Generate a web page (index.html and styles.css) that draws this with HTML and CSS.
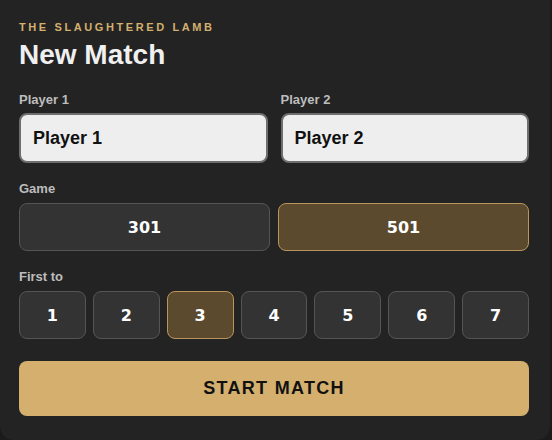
FILE: index.html
```html
<!DOCTYPE html>
<html lang="en">
<head>
    <meta charset="UTF-8">
    <meta name="viewport" content="width=device-width, initial-scale=1.0">
    <title>New Match</title>
    <link rel="stylesheet" href="styles.css">
</head>
<body>
    <div class="panel">
        <div class="brand">The Slaughtered Lamb</div>
        <h1 class="title">New Match</h1>

        <div class="players">
            <div class="field">
                <label for="p1">Player 1</label>
                <input type="text" id="p1" value="Player 1">
            </div>
            <div class="field">
                <label for="p2">Player 2</label>
                <input type="text" id="p2" value="Player 2">
            </div>
        </div>

        <div class="section">
            <div class="section-label">Game</div>
            <div class="game-options">
                <button class="option">301</button>
                <button class="option selected">501</button>
            </div>
        </div>

        <div class="section">
            <div class="section-label">First to</div>
            <div class="legs-options">
                <button class="option">1</button>
                <button class="option">2</button>
                <button class="option selected">3</button>
                <button class="option">4</button>
                <button class="option">5</button>
                <button class="option">6</button>
                <button class="option">7</button>
            </div>
        </div>

        <button class="start-button">START MATCH</button>
    </div>
</body>
</html>
```

FILE: styles.css
```css
html, body {
    margin: 0;
    height: 100%;
}

body {
    font-family: "Liberation Sans", Arial, sans-serif;
    background-color: #1b1b1b;
    color: #eee;
    overflow: hidden;
}

.panel {
    box-sizing: border-box;
    width: 550px;
    height: 440px;
    padding: 20px 21px 0 19px;
    background-color: #232323;
    border-radius: 0 0 14px 14px;
}

.brand {
    font-size: 11px;
    font-weight: 900;
    letter-spacing: 2.6px;
    text-transform: uppercase;
    color: #d4af6e;
    line-height: 14px;
}

.title {
    margin: 4px 0 0;
    font-size: 28px;
    font-weight: bold;
    line-height: 33px;
    color: #f0f0f0;
}

.players {
    display: flex;
    gap: 13px;
    margin-top: 21px;
}

.field {
    flex: 1;
    min-width: 0;
    display: flex;
    flex-direction: column;
}

.field label,
.section-label {
    font-size: 13px;
    font-weight: bold;
    color: #bdbdbd;
    line-height: 16px;
    margin-bottom: 5px;
}

.field input {
    box-sizing: border-box;
    width: 100%;
    height: 50px;
    padding: 0 12px;
    border: 2px solid #6e6e6e;
    border-radius: 8px;
    background-color: #eeeeee;
    font-family: inherit;
    font-size: 18px;
    font-weight: bold;
    color: #111;
    outline: none;
}

.section {
    margin-top: 18px;
}

.section-label {
    margin-bottom: 6px;
}

.game-options {
    display: flex;
    gap: 8px;
}

.legs-options {
    display: grid;
    grid-template-columns: repeat(7, 1fr);
    gap: 7px;
}

.option {
    box-sizing: border-box;
    height: 48px;
    flex: 1;
    border: 1px solid #555;
    border-radius: 8px;
    background-color: #333;
    color: #fff;
    font-family: "DejaVu Sans", sans-serif;
    font-size: 16px;
    font-weight: bold;
    cursor: pointer;
}

.option.selected {
    background-color: #5c4a2e;
    border-color: #b8955c;
}

.start-button {
    display: block;
    box-sizing: border-box;
    width: 100%;
    height: 55px;
    margin-top: 22px;
    border: none;
    border-radius: 8px;
    background-color: #d4af6e;
    color: #111;
    font-family: inherit;
    font-size: 18px;
    font-weight: bold;
    letter-spacing: 1.3px;
    cursor: pointer;
}
```
